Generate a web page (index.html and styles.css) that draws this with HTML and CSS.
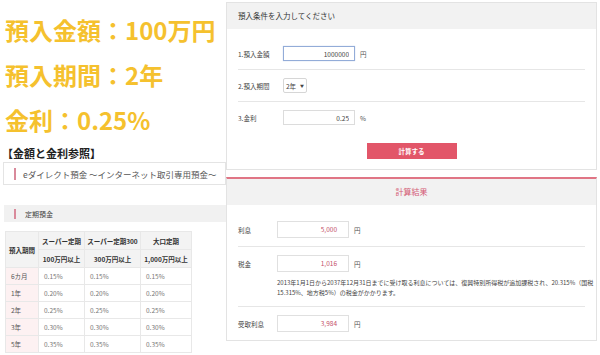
FILE: index.html
```html
<!DOCTYPE html>
<html lang="ja">
  <head>
    <meta charset="UTF-8" />
    <title>定期預金 利息計算</title>
    <link rel="stylesheet" href="styles.css">
  </head>
  <body>
    <div class="page">
      <div class="left">
        <div class="big-lines">
          <div>預入金額：100万円</div>
          <div>預入期間：2年</div>
          <div>金利：0.25%</div>
        </div>
        <div class="ref-title">【金額と金利参照】</div>
        <div class="product-box">
          <span class="mark"></span>eダイレクト預金 ～インターネット取引専用預金～
        </div>
        <div class="sub-bar"><span class="mark"></span>定期預金</div>
        <table class="rate-table">
          <tr class="head">
            <th rowspan="2" class="c1">預入期間</th>
            <th class="c2">スーパー定期</th>
            <th class="c3">スーパー定期300</th>
            <th class="c4">大口定期</th>
          </tr>
          <tr class="head">
            <th>100万円以上</th>
            <th>300万円以上</th>
            <th>1,000万円以上</th>
          </tr>
          <tr><td class="term">6カ月</td><td>0.15%</td><td>0.15%</td><td>0.15%</td></tr>
          <tr><td class="term">1年</td><td>0.20%</td><td>0.20%</td><td>0.20%</td></tr>
          <tr><td class="term">2年</td><td>0.25%</td><td>0.25%</td><td>0.25%</td></tr>
          <tr><td class="term">3年</td><td>0.30%</td><td>0.30%</td><td>0.30%</td></tr>
          <tr><td class="term">5年</td><td>0.35%</td><td>0.35%</td><td>0.35%</td></tr>
        </table>
      </div>

      <div class="right">
        <div class="panel">
          <div class="panel-head">預入条件を入力してください</div>
          <div class="panel-body">
            <div class="row">
              <span class="label">1.預入金額</span>
              <input class="field focused" type="text" value="1000000" />
              <span class="unit">円</span>
            </div>
            <div class="row">
              <span class="label">2.預入期間</span>
              <span class="select">2年<span class="caret">▼</span></span>
            </div>
            <div class="row last">
              <span class="label">3.金利</span>
              <input class="field" type="text" value="0.25" />
              <span class="unit">%</span>
            </div>
            <div class="actions">
              <button class="calc-btn">計算する</button>
            </div>
          </div>
        </div>

        <div class="panel result">
          <div class="panel-head">計算結果</div>
          <div class="panel-body">
            <div class="row">
              <span class="label">利息</span>
              <div class="out">5,000</div>
              <span class="unit">円</span>
            </div>
            <div class="row tax">
              <div class="tax-line">
                <span class="label">税金</span>
                <div class="out">1,016</div>
                <span class="unit">円</span>
              </div>
              <p class="note">
                2013年1月1日から2037年12月31日までに受け取る利息については、復興特別所得税が追加課税され、20.315%（国税<br />
                15.315%、地方税5%）の税金がかかります。
              </p>
            </div>
            <div class="row last">
              <span class="label">受取利息</span>
              <div class="out">3,984</div>
              <span class="unit">円</span>
            </div>
          </div>
        </div>
      </div>
    </div>
  </body>
</html>
```

FILE: styles.css
```css
body {
  margin: 0;
  padding: 0;
  background: #fff;
  font-family: "Noto Sans CJK JP", "Noto Sans", sans-serif;
  color: #333;
}

.page {
  display: flex;
  width: 600px;
  height: 355px;
  overflow: hidden;
}

.left {
  width: 226px;
  flex-shrink: 0;
}

.big-lines {
  padding: 7px 0 0 5px;
  font-size: 24px;
  font-weight: bold;
  line-height: 45px;
  color: #f5c12e;
}

.ref-title {
  margin: 3px 0 0 2px;
  font-size: 11px;
  font-weight: bold;
  line-height: 16px;
  color: #222;
}

.product-box {
  margin: 1px 0 0 3px;
  height: 21px;
  border: 1px solid #e4e4e4;
  padding-left: 10px;
  display: flex;
  align-items: center;
  font-size: 8.5px;
  color: #555;
  white-space: nowrap;
  overflow: hidden;
}

.mark {
  display: inline-block;
  flex-shrink: 0;
  width: 2px;
  height: 12px;
  background: #d98a9b;
  margin-right: 7px;
}

.sub-bar {
  margin: 20px 0 0 4px;
  height: 17px;
  background: #f1f1f1;
  padding-left: 10px;
  display: flex;
  align-items: center;
  font-size: 7px;
  color: #444;
}

.sub-bar .mark {
  height: 10px;
  margin-right: 9px;
}

.rate-table {
  margin: 9px 0 0 5px;
  border-collapse: collapse;
  font-size: 6.5px;
  color: #777;
}

.rate-table th,
.rate-table td {
  border: 1px solid #e8e8e8;
  padding: 0;
}

.rate-table th {
  background: #f3f3f3;
  color: #333;
  font-weight: bold;
  height: 17px;
  text-align: center;
}

.rate-table td {
  height: 16px;
  padding-left: 5px;
}

.rate-table .c1 { width: 32px; }
.rate-table .c2 { width: 45px; }
.rate-table .c3 { width: 55px; }
.rate-table .c4 { width: 50px; }

.rate-table td.term {
  background: #fdf1f2;
  color: #555;
}

.right {
  width: 371px;
  flex-shrink: 0;
}

.panel {
  margin-top: 2px;
  border: 1px solid #e3e3e3;
  background: #fff;
}

.panel-head {
  height: 26px;
  line-height: 26px;
  padding-left: 11px;
  background: #f2f2f2;
  font-size: 7.5px;
  color: #333;
}

.panel-body {
  padding: 9px 11px 10px;
}

.row {
  display: flex;
  align-items: center;
  height: 31px;
  border-bottom: 1px solid #e6e6e6;
  font-size: 6.5px;
}

.row.last {
  border-bottom: none;
}

.label {
  width: 45px;
  flex-shrink: 0;
  color: #444;
}

.field {
  box-sizing: border-box;
  width: 72px;
  height: 15px;
  margin: 0;
  padding: 0 5px;
  border: 1px solid #dcdcdc;
  text-align: right;
  font-family: inherit;
  font-size: 6.5px;
  color: #444;
  background: #fff;
  outline: none;
}

.field.focused {
  border-color: #93acd8;
  box-shadow: 0 0 1px #b7c9e8;
}

.unit {
  margin-left: 5px;
  color: #555;
}

.select {
  box-sizing: border-box;
  display: flex;
  align-items: center;
  width: 24px;
  height: 15px;
  padding-left: 2px;
  border: 1px solid #d6d6d6;
  border-radius: 2px;
  color: #444;
}

.caret {
  margin-left: 4px;
  font-size: 4px;
}

.actions {
  display: flex;
  justify-content: center;
  margin-top: 10px;
}

.calc-btn {
  width: 90px;
  height: 16px;
  border: none;
  padding: 0;
  background: #e25669;
  color: #fff;
  font-family: inherit;
  font-size: 6.5px;
  font-weight: bold;
}

.panel.result {
  margin-top: 7px;
  border-top: 2px solid #e07585;
}

.result .panel-head {
  padding-left: 0;
  text-align: center;
  color: #d45b75;
  font-size: 8px;
}

.result .panel-body {
  padding: 8px 11px 0;
}

.result .row {
  height: auto;
  padding: 8px 0;
}

.result .label {
  width: 39px;
}

.out {
  box-sizing: border-box;
  width: 72px;
  height: 17px;
  line-height: 15px;
  padding-right: 11px;
  border: 1px solid #e0e0e0;
  text-align: right;
  color: #c4506a;
}

.row.tax {
  flex-direction: column;
  align-items: flex-start;
}

.tax-line {
  display: flex;
  align-items: center;
}

.note {
  margin: 6px 0 0 39px;
  font-size: 6px;
  line-height: 10px;
  color: #444;
  white-space: nowrap;
}
```
